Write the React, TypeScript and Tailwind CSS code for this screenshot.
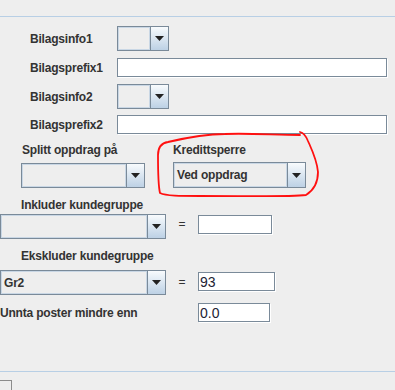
import React from 'react';

const font = { fontFamily: '"Liberation Sans", Arial, sans-serif' };

const Label = ({ text, className = '' }: { text: string; className?: string }) => (
  <span className={`text-[12px] font-bold tracking-[-0.2px] text-[#333333] whitespace-nowrap leading-none ${className}`}>
    {text}
  </span>
);

// Metal-style combo box
const Combo = ({ value = '', className = '' }: { value?: string; className?: string }) => (
  <div className={`flex border border-[#7a8a99] bg-[#eeeeee] ${className}`}>
    <div className="flex-1 flex items-center border border-[#c9d7e5] px-[2px] min-w-0">
      <span className="text-[12px] font-bold tracking-[-0.2px] text-[#333333] leading-none">{value}</span>
    </div>
    <div className="w-[18px] flex items-center justify-center border-l border-[#7a8a99] bg-gradient-to-b from-[#f8fbfd] to-[#bdd1e5]">
      <svg width="9" height="5" viewBox="0 0 9 5">
        <path d="M0 0h9L4.5 5z" fill="#222" />
      </svg>
    </div>
  </div>
);

const Field = ({ value = '', className = '' }: { value?: string; className?: string }) => (
  <div className={`flex items-center bg-white border border-[#7a8a99] shadow-[1px_1px_0_#ffffff] px-[1px] ${className}`}>
    <span className="text-[14px] text-[#222233] leading-none">{value}</span>
  </div>
);

const App = () => {
  return (
    <div className="relative w-[395px] h-[390px] overflow-hidden bg-[#eeeeee]" style={font}>
      <div className="h-[16px]" />
      <div className="border-t border-[#b8cfe5]" />

      {/* Bilagsinfo / prefix */}
      <div className="flex items-center h-[25px] mt-[9px] pl-[30px]">
        <Label text="Bilagsinfo1" className="w-[87px]" />
        <Combo className="w-[52px] h-[25px]" />
      </div>
      <div className="flex items-center h-[19px] mt-[7px] pl-[30px]">
        <Label text="Bilagsprefix1" className="w-[87px]" />
        <Field className="w-[270px] h-[19px]" />
      </div>
      <div className="flex items-center h-[25px] mt-[7px] pl-[30px]">
        <Label text="Bilagsinfo2" className="w-[87px]" />
        <Combo className="w-[52px] h-[25px]" />
      </div>
      <div className="flex items-center h-[19px] mt-[6px] pl-[30px]">
        <Label text="Bilagsprefix2" className="w-[87px]" />
        <Field className="w-[270px] h-[19px]" />
      </div>

      {/* Splitt / Kredittsperre */}
      <div className="flex items-center h-[16px] mt-[8px]">
        <Label text="Splitt oppdrag på" className="ml-[22px] w-[151px]" />
        <Label text="Kredittsperre" />
      </div>
      <div className="flex items-start h-[26px] mt-[4px]">
        <Combo className="ml-[21px] mt-px w-[124px] h-[25px]" />
        <Combo value="Ved oppdrag" className="ml-[28px] w-[133px] h-[26px]" />
      </div>

      {/* Inkluder */}
      <div className="flex items-center h-[16px] mt-[9px]">
        <Label text="Inkluder kundegruppe" className="ml-[21px]" />
      </div>
      <div className="flex items-start h-[25px] mt-[1px]">
        <Combo className="w-[166px] h-[25px]" />
        <span className="w-[32px] text-center text-[12px] text-[#333333] leading-[20px]">=</span>
        <Field className="mt-px w-[74px] h-[19px]" />
      </div>

      {/* Ekskluder */}
      <div className="flex items-center h-[16px] mt-[9px]">
        <Label text="Ekskluder kundegruppe" className="ml-[21px]" />
      </div>
      <div className="flex items-start h-[25px] mt-[6px]">
        <Combo value="Gr2" className="w-[166px] h-[25px]" />
        <span className="w-[32px] text-center text-[12px] text-[#333333] leading-[24px]">=</span>
        <Field value="93" className="mt-[2px] w-[77px] h-[19px]" />
      </div>

      {/* Unnta */}
      <div className="flex items-center h-[19px] mt-[8px]">
        <Label text="Unnta poster mindre enn" className="w-[198px]" />
        <Field value="0.0" className="w-[72px] h-[19px]" />
      </div>

      <div className="mt-[49px] border-t border-[#b8cfe5]" />
      <div className="mt-[8px] w-[12px] h-[12px] border-t border-r border-[#8c8c8c]" />

      {/* hand-drawn red annotation */}
      <svg className="absolute inset-0 pointer-events-none" width="395" height="390" viewBox="0 0 395 390">
        <path
          d="M300,132 C304,133 306,136 308,141 C312,150 317,160 318,172 C318,182 314,190 306,195 C290,197 250,196 200,196 C180,196 166,196 160,193 C158,185 158,168 158,155 C158,147 162,143 168,142 C185,138 205,134 225,134 C250,133 275,135 300,135"
          fill="none"
          stroke="#ff1010"
          strokeWidth="1.8"
          strokeLinecap="round"
        />
      </svg>
    </div>
  );
};

export default App;
